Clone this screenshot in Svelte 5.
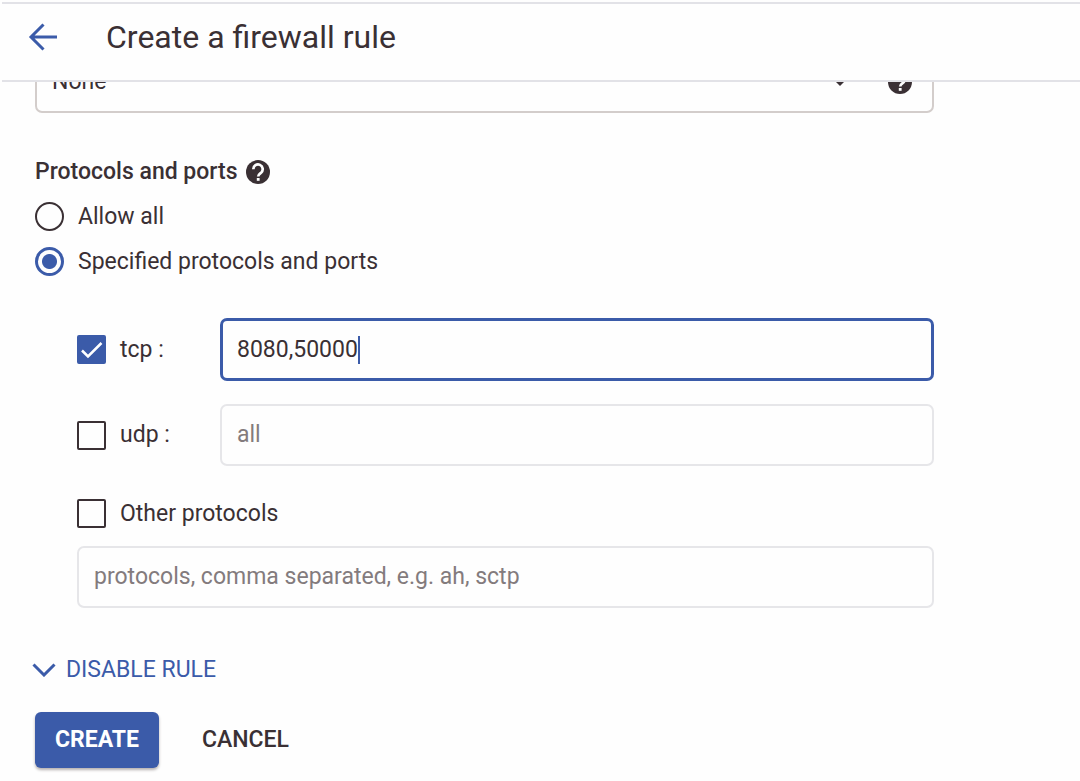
<script>
  let mode = $state('specified');
  let tcp = $state(true);
  let udp = $state(false);
  let other = $state(false);
  let tcpPorts = $state('8080,50000');
  let udpPorts = $state('');
  let otherList = $state('');
</script>

{#snippet help()}
  <svg class="help" viewBox="0 0 24 24" aria-hidden="true">
    <circle cx="12" cy="12" r="12" fill="#3a3034" />
    <path d="M7.300 9.200a4.700 4.700 0 1 1 7.800 3.500c-1.700 1.400-2.900 2-2.900 3.700" fill="none" stroke="#fff" stroke-width="2.700" />
    <rect x="10.800" y="18" width="2.800" height="2.800" fill="#fff" />
  </svg>
{/snippet}

<div class="page">
  <header>
    <button class="back" aria-label="Back">
      <svg viewBox="0 0 30 28" aria-hidden="true">
        <path d="M29 14H3M15.500 1.500L3 14l12.500 12.500" fill="none" stroke="#3b5ba9" stroke-width="3" />
      </svg>
    </button>
    <h1>Create a firewall rule</h1>
  </header>

  <main>
    <div class="scrolled">
      <div class="filter">
        <select aria-label="Second source filter">
          <option>None</option>
        </select>
        <svg class="arrow" viewBox="0 0 12 6" aria-hidden="true"><path d="M0 0h12L6 6z" fill="#3a3034" /></svg>
        {@render help()}
      </div>
    </div>

    <h2>Protocols and ports {@render help()}</h2>

    <div class="radios">
      <label class="choice"><input type="radio" name="mode" value="all" bind:group={mode} />Allow all</label>
      <label class="choice"><input type="radio" name="mode" value="specified" bind:group={mode} />Specified protocols and ports</label>
    </div>

    <div class="protocols">
      <div class="row">
        <label class="choice"><input type="checkbox" bind:checked={tcp} />tcp :</label>
        <div class="field active">
          <input class="sized" type="text" aria-label="tcp ports" bind:value={tcpPorts} />
          <span class="caret"></span>
        </div>
      </div>
      <div class="row">
        <label class="choice"><input type="checkbox" bind:checked={udp} />udp :</label>
        <div class="field">
          <input type="text" aria-label="udp ports" placeholder="all" bind:value={udpPorts} />
        </div>
      </div>
      <div class="other">
        <label class="choice"><input type="checkbox" bind:checked={other} />Other protocols</label>
        <div class="field">
          <input type="text" aria-label="Other protocols" placeholder="protocols, comma separated, e.g. ah, sctp" bind:value={otherList} />
        </div>
      </div>
    </div>

    <button class="disclosure">
      <svg viewBox="0 0 24 14" aria-hidden="true"><path d="M1.500 1.500L12 12 22.500 1.500" fill="none" stroke="#3b5ba9" stroke-width="3" /></svg>
      DISABLE RULE
    </button>

    <div class="actions">
      <button class="create">CREATE</button>
      <button class="cancel">CANCEL</button>
    </div>
  </main>
</div>

<style>
  :global(body) {
    margin: 0;
    background: #fefefe;
  }
  .page,
  button,
  input,
  select {
    font-family: Roboto, sans-serif;
    font-size: 23px;
    line-height: 28px;
    color: #3a3034;
  }
  svg {
    display: block;
    flex: none;
  }
  button {
    border: 0;
    padding: 0;
    background: none;
    cursor: pointer;
  }
  header {
    display: flex;
    align-items: center;
    gap: 48px;
    height: 66px;
    margin: 2px 0 0 2px;
    padding: 0 0 10px 26px;
    border-top: 2px solid #e2e2e7;
    border-bottom: 2px solid #e2e2e7;
  }
  .back svg {
    width: 30px;
    height: 28px;
  }
  h1 {
    margin: 0;
    font-size: 32px;
    line-height: 40px;
    font-weight: 400;
  }
  main {
    padding: 0 146px 12px 35px;
  }
  .scrolled {
    display: flex;
    align-items: flex-end;
    height: 31px;
    overflow: hidden;
  }
  .filter {
    flex: 1;
    display: flex;
    align-items: center;
    height: 62px;
    box-sizing: border-box;
    padding: 0 20px 0 15px;
    border: 2px solid #d3cdcb;
    border-radius: 7px;
  }
  .filter select {
    flex: 1;
    appearance: none;
    border: 0;
    padding: 0;
    background: none;
  }
  .arrow {
    width: 14px;
    height: 7px;
    margin-right: 41px;
  }
  .help {
    width: 24px;
    height: 24px;
  }
  h2 {
    display: flex;
    align-items: center;
    gap: 8px;
    margin: 45px 0 0;
    font-size: 23px;
    line-height: 28px;
    font-weight: 500;
  }
  .radios {
    display: grid;
    gap: 16px;
    margin-top: 16px;
  }
  .choice {
    display: flex;
    align-items: center;
    gap: 14px;
    justify-self: start;
  }
  .choice input {
    appearance: none;
    flex: none;
    box-sizing: border-box;
    width: 29px;
    height: 29px;
    margin: 0;
    border: 2px solid #3a3034;
    border-radius: 2px;
  }
  .choice input[type='radio'] {
    border-radius: 50%;
  }
  .choice input[type='radio']:checked {
    border: 3px solid #3b5ba9;
    background: radial-gradient(circle, #3b5ba9 7px, transparent 8px);
  }
  .choice input[type='checkbox']:checked {
    border-color: #3b5ba9;
    background: #3b5ba9
      url("data:image/svg+xml,%3Csvg xmlns='http://www.w3.org/2000/svg' viewBox='0 0 25 25'%3E%3Cpath d='M3 13.500l6 6L22.500 6' fill='none' stroke='white' stroke-width='2.500'/%3E%3C/svg%3E")
      center / 25px 25px no-repeat;
  }
  .protocols {
    display: grid;
    gap: 23px;
    margin: 42px 0 0 42px;
  }
  .row {
    display: grid;
    grid-template-columns: 143px 1fr;
    align-items: center;
  }
  .other {
    display: grid;
    gap: 18px;
    margin-top: 10px;
  }
  .field {
    display: flex;
    align-items: center;
    height: 62px;
    box-sizing: border-box;
    padding: 0 15px;
    border: 2px solid #e6e6e9;
    border-radius: 7px;
  }
  .field.active {
    height: 63px;
    padding: 0 14px;
    border: 3px solid #3b5ba9;
  }
  .field input {
    flex: 1;
    min-width: 0;
    padding: 0;
    border: 0;
    outline: 0;
    background: none;
  }
  .field .sized {
    flex: none;
    field-sizing: content;
    caret-color: transparent;
  }
  .field ::placeholder {
    color: #837b7d;
    opacity: 1;
  }
  .caret {
    width: 2px;
    height: 28px;
    background: #3b5ba9;
  }
  .disclosure {
    display: flex;
    align-items: center;
    gap: 10px;
    margin: 48px 0 0 -3px;
    color: #3b5ba9;
  }
  .disclosure svg {
    width: 24px;
    height: 14px;
  }
  .actions {
    display: flex;
    align-items: center;
    gap: 43px;
    margin-top: 28px;
  }
  .actions button {
    font-weight: 500;
  }
  .actions .create {
    height: 56px;
    padding: 0 20px;
    border-radius: 6px;
    background: #3b5ba9;
    color: #fff;
    font-weight: 700;
    box-shadow: 0 2px 3px #b5b0b0;
  }
</style>
